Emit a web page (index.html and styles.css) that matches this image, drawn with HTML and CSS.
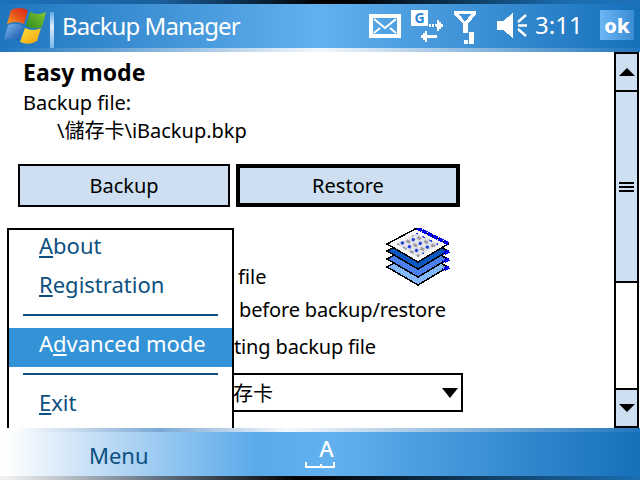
FILE: index.html
```html
<!DOCTYPE html>
<html lang="en">
<head>
<meta charset="utf-8">
<title>Backup Manager</title>
<link rel="stylesheet" href="styles.css">
</head>
<body>
<div class="screen">
  <header class="top">
    <div class="top-edge"></div>
    <div class="top-bar">
      <svg class="flag" width="42" height="38" viewBox="0 0 42 38">
        <defs>
          <linearGradient id="r" x1="0" y1="1" x2="1" y2="0"><stop offset="0" stop-color="#f8a020"/><stop offset=".5" stop-color="#e8501c"/><stop offset="1" stop-color="#d02818"/></linearGradient>
          <linearGradient id="g" x1="0" y1="1" x2="1" y2="0"><stop offset="0" stop-color="#2a8a20"/><stop offset="1" stop-color="#88c830"/></linearGradient>
          <linearGradient id="b" x1="0" y1="0" x2="1" y2="1"><stop offset="0" stop-color="#80b8ee"/><stop offset="1" stop-color="#1050a8"/></linearGradient>
          <linearGradient id="y" x1="0" y1="0" x2="1" y2="1"><stop offset="0" stop-color="#ffe040"/><stop offset="1" stop-color="#f0a008"/></linearGradient>
        </defs>
        <path d="M7 3Q15 -1 24 3L20 17Q12 13 3 17Z" fill="url(#r)"/>
        <path d="M26 5Q33 9 42 5L38 20Q30 23 22 19Z" fill="url(#g)"/>
        <path d="M4 18Q12 15 19 19L15 34Q8 30 0 33Z" fill="url(#b)"/>
        <path d="M21 21Q29 25 37 21L33 34Q25 39 16 35Z" fill="url(#y)"/>
      </svg>
      <div class="bar-divider"></div>
      <div class="title">Backup Manager</div>
      <svg class="mail" width="32" height="24" viewBox="0 0 32 24" shape-rendering="crispEdges">
        <path fill="#fff" fill-rule="evenodd" d="M0 0h32v24H0zM4 4v16h24V4z"/>
        <path fill="none" stroke="#fff" stroke-width="2" d="M5 5l11 9 11-9M5 19l6-5M27 19l-6-5" shape-rendering="auto"/>
      </svg>
      <svg class="sync" width="33" height="36" viewBox="0 -4 33 36" shape-rendering="crispEdges">
        <rect x="0" y="0" width="17" height="16" fill="#fff"/>
        <text x="8.500" y="13" text-anchor="middle" class="sync-g">G</text>
        <path fill="#fff" d="M18 14h2v3h-2zM21 14h2v3h-2zM24 14h2v-4h2v2h2v2h2v3h-2v2h-2v2h-2v-4h-1z"/>
        <path fill="#fff" d="M10 25h2v-2h2v-2h2v4h10v3H16v4h-2v-2h-2v-2h-2z"/>
      </svg>
      <svg class="signal" width="22" height="33" viewBox="0 0 22 33" shape-rendering="crispEdges">
        <path fill="#fff" fill-rule="evenodd" d="M0 0h22v3l-8 10v9H9V13L0 3zM5 3l6 8 6-8z"/>
        <rect x="10" y="29" width="4" height="4" fill="#fff"/>
        <rect x="15" y="21" width="5" height="12" fill="#fff"/>
      </svg>
      <svg class="speaker" width="30" height="25" viewBox="0 0 30 25">
        <path fill="#fff" shape-rendering="crispEdges" d="M0 8h6l10-8v25L6 17H0z"/>
        <path fill="none" stroke="#fff" stroke-width="2.400" d="M21 9l8-7M21 12.500h9M21 16l8 7"/>
      </svg>
      <div class="clock">3:11</div>
      <div class="ok">ok</div>
    </div>
    <div class="top-fade"></div>
  </header>

  <main class="middle">
    <section class="content">
      <h1 class="heading">Easy mode</h1>
      <p class="label">Backup file:</p>
      <p class="path">\儲存卡\iBackup.bkp</p>
      <div class="actions">
        <button class="btn btn-backup">Backup</button>
        <button class="btn btn-restore">Restore</button>
      </div>
      <div class="file-row">
        <span class="file-word">file</span>
        <svg class="stack" width="64" height="58" viewBox="0 0 64 58" shape-rendering="crispEdges">
          <defs>
            <pattern id="dots" width="8" height="8" patternUnits="userSpaceOnUse" patternTransform="rotate(28)">
              <rect width="8" height="8" fill="#e4e4e8"/>
              <rect x="0" y="0" width="4" height="3" fill="#9c9ca4"/>
              <rect x="4" y="4" width="3" height="3" fill="#1c3cd8"/>
            </pattern>
          </defs>
          <polygon points="1,39 31,23 62,39 32,57" fill="#84b8fc" stroke="#000" stroke-width="1.500"/>
          <polygon points="1,31 31,15 62,31 32,49" fill="#4a80f0" stroke="#000" stroke-width="1.500"/>
          <polygon points="1,23 31,7 62,23 32,41" fill="#0a58c0" stroke="#000" stroke-width="1.500"/>
          <polygon points="1,16 31,0 62,16 32,34" fill="#f6f6f6" stroke="#000" stroke-width="1.500"/>
          <polygon points="10,16 31,5 53,16 32,29" fill="url(#dots)"/>
          <path fill="none" stroke="#0000f0" stroke-width="3.500" stroke-dasharray="5 1" d="M31 0L63 16M63 23l-6 3M63 31l-6 3M63 39l-6 3"/>
        </svg>
      </div>
      <p class="option option-restore">before backup/restore</p>
      <p class="option option-existing">ting backup file</p>
      <div class="combo">
        <span>存卡</span>
        <i class="combo-arrow"></i>
      </div>

      <nav class="menu">
        <a class="item"><u>A</u>bout</a>
        <a class="item"><u>R</u>egistration</a>
        <hr class="sep">
        <a class="item active">A<u>d</u>vanced mode</a>
        <hr class="sep">
        <a class="item"><u>E</u>xit</a>
      </nav>
    </section>
    <aside class="scroll">
      <div class="scroll-btn"><i class="tri-up"></i></div>
      <div class="thumb"><i class="grip"></i></div>
      <div class="track"></div>
      <div class="scroll-btn scroll-btn-down"><i class="tri-down"></i></div>
    </aside>
  </main>

  <footer class="bottom">
    <div class="bottom-fade"></div>
    <div class="bottom-bar">
      <span class="softkey">Menu</span>
      <div class="sip">
        <span class="sip-a">A</span>
        <i class="sip-base"></i>
      </div>
    </div>
    <div class="bottom-edge"></div>
  </footer>
</div>
</body>
</html>
```
FILE: styles.css
```css
* { box-sizing: border-box; }
html, body { margin: 0; padding: 0; background: #fff; }
body { font-family: "Noto Sans", "Noto Sans CJK TC", sans-serif; color: #000; }
.screen { width: 640px; height: 480px; display: flex; flex-direction: column; overflow: hidden; }

.top { flex: none; height: 52px; }
.top-edge { height: 4px; background: linear-gradient(90deg, #1c72ba 0, #1a5f9c 25%, #000 50%, #000 55%, #1a6cae 88%, #1c72ba 100%); }
.top-bar { height: 44px; display: flex; align-items: flex-start; background: linear-gradient(90deg, #1f76be 0, #62b0ee 50%, #1670ba 100%); }
.top-fade { height: 4px; background: linear-gradient(90deg, #1f76be 0, #f4f8fd 50%, #1f76be 100%); }

.flag { flex: none; margin: 3px 0 0 4px; }
.bar-divider { flex: none; width: 4px; height: 36px; margin: 8px 0 0 4px; background: linear-gradient(180deg, #5aa8e8, #dcecfb 40%, #7ab8ee); }
.title { flex: none; width: 307px; margin: 6px 0 0 8px; color: #fff; font-size: 24px; line-height: 32px; letter-spacing: -0.95px; white-space: nowrap; }
.mail { flex: none; margin-top: 10px; }
.sync { flex: none; margin: 2px 0 0 10px; }
.sync-g { font: bold 14px "Noto Sans", sans-serif; fill: #2a86d0; }
.signal { flex: none; margin: 7px 0 0 10px; }
.speaker { flex: none; margin: 9px 0 0 21px; }
.clock { flex: none; width: 46px; margin: 5px 0 0 8px; color: #fff; font-size: 24px; line-height: 32px; white-space: nowrap; }
.ok { flex: none; width: 34px; height: 30px; margin: 6px 0 0 19px; background: linear-gradient(90deg, #6cb6f4, #3a8cd4); color: #fff; font-weight: 800; font-size: 20px; line-height: 32px; text-align: center; }

.middle { flex: none; height: 376px; display: flex; }
.content { position: relative; flex: none; width: 614px; overflow: hidden; }
.heading { margin: 5px 0 0 23px; font-size: 23px; line-height: 30px; font-weight: 700; }
.label { margin: 1px 0 0 23px; font-size: 20px; line-height: 30px; }
.path { margin: -2px 0 0 57px; font-size: 20px; line-height: 30px; }
.actions { display: flex; gap: 6px; margin: 18px 0 0 18px; }
.btn { height: 43px; padding: 0; background: #cddff0; color: #000; font: 20px "Noto Sans", sans-serif; border: 2px solid #000; border-radius: 0; }
.btn-backup { width: 212px; }
.btn-restore { width: 224px; border-width: 4px; }

.file-row { display: flex; align-items: flex-start; height: 66px; margin-top: 21px; padding-left: 238px; }
.file-word { width: 148px; margin-top: 34px; font-size: 20px; line-height: 30px; }
.stack { flex: none; }
.option { margin: 0; font-size: 20px; line-height: 30px; letter-spacing: -0.15px; }
.option-restore { padding-left: 239px; margin-top: 1px; }
.option-existing { padding-left: 234px; margin-top: 7px; }
.combo { display: flex; align-items: center; justify-content: space-between; width: 236px; height: 39px; margin: 11px 0 0 227px; padding: 0 3px 0 4px; border: 2px solid #000; font-size: 20px; }
.combo-arrow { width: 0; height: 0; border: 8px solid transparent; border-bottom: 0; border-top: 10px solid #000; }

.menu { position: absolute; left: 7px; top: 176px; width: 227px; height: 200px; display: flex; flex-direction: column; background: #fff; border: 2px solid #000; border-bottom: 0; overflow: hidden; }
.item { flex: none; display: block; height: 39px; padding-left: 30px; color: #0b5080; font-size: 22px; line-height: 31px; white-space: nowrap; }
.item.active { background: #3492d6; color: #fff; }
.sep { flex: none; height: 2px; width: 195px; margin: 6px 0 12px 14px; border: 0; background: #0b5080; }

.scroll { flex: none; width: 25px; display: flex; flex-direction: column; border: 2px solid #000; border-top: 0; border-bottom: 0; }
.scroll-btn { flex: none; height: 38px; display: flex; align-items: center; justify-content: center; background: #cddff0; border-top: 2px solid #000; }
.scroll-btn-down { border-bottom: 2px solid #000; height: 40px; }
.tri-up { width: 0; height: 0; border: 8px solid transparent; border-top: 0; border-bottom: 8px solid #000; }
.tri-down { width: 0; height: 0; border: 8px solid transparent; border-bottom: 0; border-top: 8px solid #000; }
.thumb { flex: none; height: 193px; display: flex; align-items: center; justify-content: center; background: #cddff0; border-top: 2px solid #000; border-bottom: 2px solid #000; }
.grip { width: 15px; height: 10px; border-top: 2px solid #000; border-bottom: 2px solid #000; background: linear-gradient(#000, #000) center / 100% 2px no-repeat; }
.track { flex: 1; background: #fff; }

.bottom { flex: none; height: 52px; }
.bottom-fade { height: 4px; background: linear-gradient(90deg, #fff 2%, #7aa8d4 25%, #f4f8fd 45%, #1f76be 100%); }
.bottom-bar { height: 44px; display: flex; align-items: flex-start; background: linear-gradient(90deg, #fff 1%, #c8e0f6 14%, #5aaaea 40%, #62b0ee 52%, #1670ba 100%); }
.bottom-edge { height: 4px; background: linear-gradient(90deg, #f0f0f0 1%, #607080 25%, #000 47%, #0f3d60 75%, #1c6eb0 100%); }
.softkey { flex: none; width: 305px; padding-left: 89px; color: #0b5080; font-size: 22px; line-height: 30px; margin-top: 8px; }
.sip { flex: none; width: 30px; height: 36px; display: flex; flex-direction: column; align-items: center; }
.sip-a { display: block; width: 30px; margin-top: 3px; padding-left: 13px; color: #fff; font-size: 22px; line-height: 26px; text-align: center; font-weight: 500; }
.sip-base { display: block; width: 30px; height: 6px; margin-top: 1px; border: 2px solid #fff; border-top: 0; background: linear-gradient(#fff, #fff) 13px 2px / 2px 2px no-repeat; }
```
